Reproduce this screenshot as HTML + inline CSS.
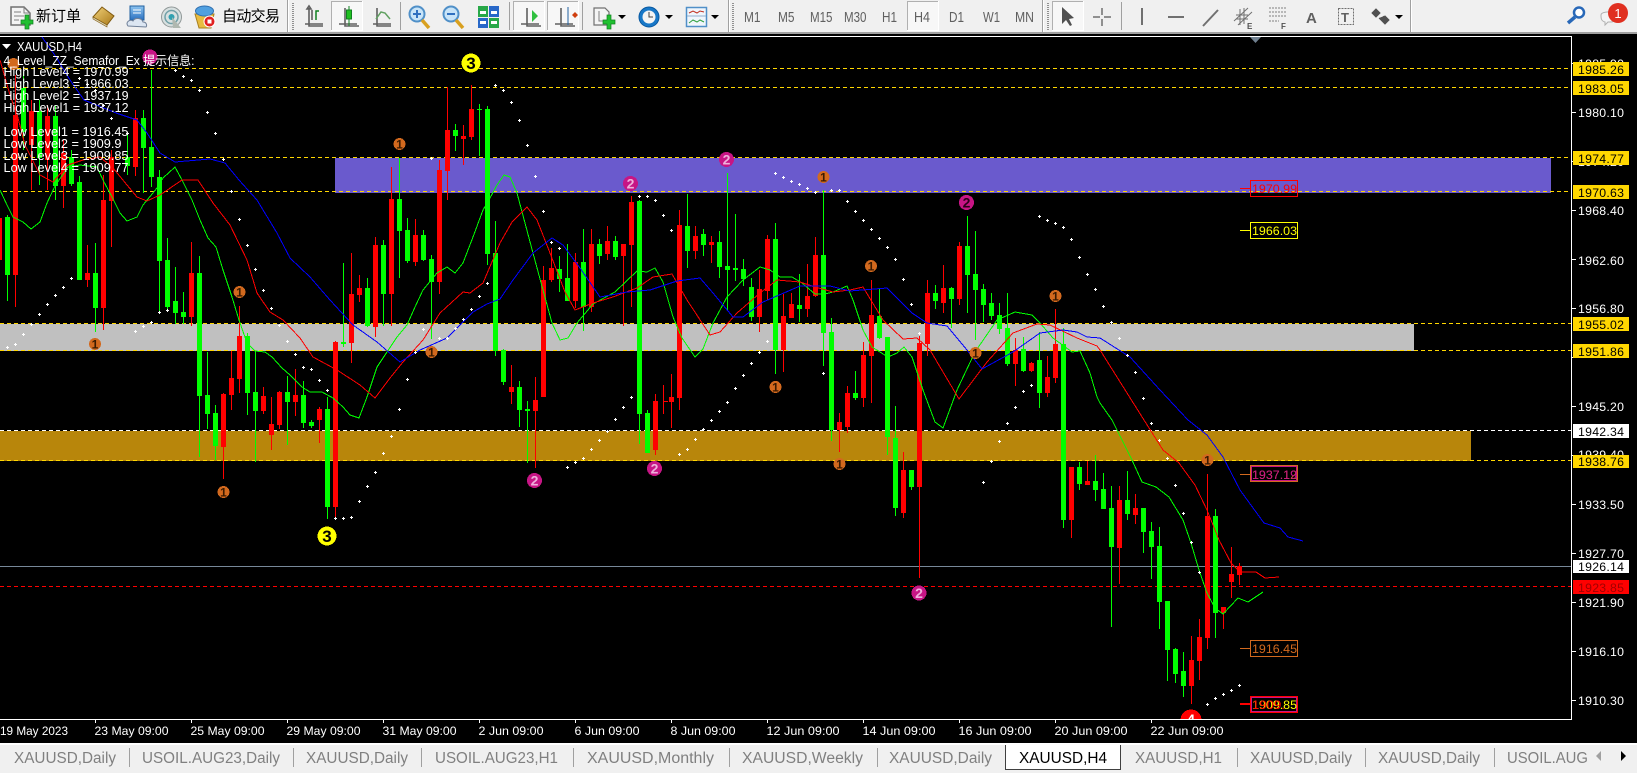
<!DOCTYPE html>
<html lang="zh"><head><meta charset="utf-8"><title>XAUUSD,H4</title>
<style>
html,body{margin:0;padding:0;background:#000;width:1637px;height:773px;overflow:hidden}
svg{display:block;font-family:"Liberation Sans","Noto Sans CJK SC",sans-serif}
.c{shape-rendering:crispEdges;fill:none}
.ax{fill:#fff;font-size:12.3px}
.tb{fill:#606060;font-size:14.5px}
.tab{fill:#808080;font-size:15.5px}
.lg{fill:#fff;font-size:12.6px}
.sem{font-size:12px;font-weight:bold;text-anchor:middle}
.ic{fill:none;stroke:#606060;stroke-width:1.6}
</style></head><body>
<svg width="1637" height="773" viewBox="0 0 1637 773" xmlns="http://www.w3.org/2000/svg">
<defs>
<marker id="d" markerWidth="3" markerHeight="3" refX="1" refY="1" markerUnits="userSpaceOnUse" overflow="visible"><path d="M1 0h1v3h-1zM0 1h3v1h-3z" fill="#fff"/></marker>
<linearGradient id="gg" x1="0" y1="0" x2="1" y2="1"><stop offset="0" stop-color="#f2d27a"/><stop offset="1" stop-color="#a87818"/></linearGradient>
<linearGradient id="bb" x1="0" y1="0" x2="0" y2="1"><stop offset="0" stop-color="#8cc4f0"/><stop offset="1" stop-color="#2a70c0"/></linearGradient>
</defs>
<rect width="1637" height="773" fill="#000"/>

<!-- zones -->
<rect x="335" y="158" width="1216" height="35" fill="#6a5acd"/>
<rect x="0" y="324" width="1414" height="27" fill="#c0c0c0"/>
<rect x="0" y="431" width="1471" height="30" fill="#b8860b"/>
<g class="c" stroke="#ffd700" stroke-dasharray="4 3">
<path d="M3 68.500H1572M3 87.500H1572M3 157.500H1572M3 191.500H1572M0 323.500H1572M0 350.500H1572M0 460.500H1572"/>
</g>
<path class="c" stroke="#fff" stroke-dasharray="4 3" d="M0 430.500H1572"/>
<path class="c" stroke="#f00" stroke-dasharray="4 3" d="M0 586.500H1572"/>
<path class="c" stroke="#778899" d="M0 566.500H1572"/>

<!-- green wicks -->
<path class="c" stroke="#0f0" d="M7.5 215V301M23.500 72V150M39.500 100V185M55.500 105V200M71.500 150V186M79.500 176V280M95.500 243V332M127.500 132V175M143.500 110V193M151.500 70V187M159.500 170V312M167.500 238V312M175.500 267V324M183.500 292V324M199.500 256V457M207.500 352V429M215.500 405V460M247.500 333V415M255.500 351V462M287.500 376V445M303.500 381V428M311.500 420V428M327.500 397V519M343.500 263V347M367.500 278V327M383.500 240V326M399.500 158V278M407.500 218V263M423.500 230V261M431.500 255V339M455.500 124V151M479.500 104V156M487.500 106V265M495.500 221V356M503.500 349V385M519.500 381V427M527.500 401V463M559.500 256V292M567.500 244V301M583.500 229V331M599.500 239V264M615.500 236V260M639.500 200V444M647.500 410V453M687.500 194V268M703.500 229V256M719.500 231V278M727.500 173V310M735.500 214V281M743.500 259V286M751.500 278V321M775.500 223V374M799.500 274V322M823.500 190V366M831.500 318V441M855.500 371V400M879.500 289V339M887.500 337V455M895.500 406V516M911.500 470V490M935.500 285V309M951.500 287V328M967.500 216V313M975.500 231V340M983.500 284V322M991.500 293V320M999.500 303V334M1007.500 293V366M1023.500 337V372M1039.500 332V408M1063.500 328V528M1079.500 462V490M1095.500 455V501M1103.500 473V509M1111.500 486V627M1127.500 471V520M1143.500 508V553M1151.500 522V579M1159.500 527V629M1167.500 601V681M1175.500 648V683M1183.500 652V697M1215.500 509V638"/>
<!-- red wicks -->
<path class="c" stroke="#f00" d="M-.5 215V262M15.500 75V307M31.500 100V190M47.500 105V190M63.500 140V208M87.500 245V287M103.500 175V330M111.500 150V247M135.500 110V176M191.500 242V326M223.500 393V479M231.500 351V410M239.500 306V393M263.500 387V414M271.500 397V450M279.500 391V429M295.500 369V416M319.500 407V443M335.500 341V519M351.500 253V363M359.500 275V302M375.500 237V337M391.500 167V326M415.500 219V266M439.500 160V294M447.500 87V200M463.500 125V165M471.500 85V140M511.500 365V404M535.500 377V468M543.500 266V397M551.500 248V282M575.500 253V308M591.500 229V312M607.500 226V260M623.500 244V326M631.500 196V307M655.500 394V455M663.500 385V414M671.500 374V428M679.500 210V410M695.500 226V259M711.500 236V263M759.500 270V332M767.500 235V300M783.500 294V372M791.500 293V318M807.500 264V317M815.500 237V297M839.500 413V452M847.500 386V433M863.500 342V407M871.500 280V403M903.500 452V518M919.500 336V578M927.500 280V356M943.500 265V313M959.500 242V305M1015.500 338V386M1031.500 362V372M1047.500 356V397M1055.500 309V383M1071.500 467V538M1087.500 461V485M1119.500 486V584M1135.500 494V524M1191.500 636V704M1199.500 619V680M1207.500 474V649M1223.500 607V629M1231.500 547V598M1239.500 563V585M663 401.500h5"/>
<!-- green bodies -->
<path class="c" stroke="#0f0" stroke-width="5" d="M7.5 217V275M23.500 88V132M39.500 111V158M55.500 116V186M71.500 157V184M79.500 182V280M95.500 273V308M127.500 157V166M143.500 118V148M151.500 147V177M159.500 177V261M167.500 260V307M175.500 301V313M183.500 312V317M199.500 273V396M207.500 395V414M215.500 413V446M247.500 336V393M255.500 392V411M287.500 392V402M303.500 395V423M311.500 422V426M327.500 409V507M343.500 342V344M367.500 288V326M383.500 245V294M399.500 199V231M407.500 230V261M423.500 235V260M431.500 259V282M455.500 130V136M479.500 109V110M487.500 109V254M495.500 253V351M503.500 350V382M519.500 387V410M527.500 409V411M559.500 269V279M567.500 278V301M583.500 262V307M599.500 244V256M615.500 241V257M639.500 201V414M647.500 413V453M687.500 226V251M703.500 234V245M719.500 242V267M727.500 266V270M735.500 268V270M743.500 269V279M751.500 287V317M775.500 239V350M799.500 305V309M823.500 255V333M831.500 332V430M855.500 393V398M879.500 316V338M887.500 337V437M895.500 438V508M911.500 470V487M935.500 293V301M951.500 288V299M967.500 246V275M975.500 274V290M983.500 289V305M991.500 303V316M999.500 315V329M1007.500 328V364M1023.500 349V371M1039.500 360V393M1063.500 344V520M1079.500 467V484M1095.500 481V490M1103.500 489V509M1111.500 508V547M1127.500 500V514M1143.500 508V532M1151.500 531V547M1159.500 546V602M1167.500 601V650M1175.500 649V674M1183.500 671V686M1215.500 516V613"/>
<!-- red bodies -->
<path class="c" stroke="#f00" stroke-width="5" d="M-.5 218V260M15.500 115V275M31.500 111V145M47.500 116V160M63.500 153V186M87.500 273V280M103.500 200V308M111.500 157V201M135.500 118V167M191.500 273V317M223.500 394V447M231.500 378V395M239.500 336V379M263.500 396V411M271.500 424V435M279.500 392V425M295.500 395V402M319.500 409V420M335.500 342V507M351.500 294V343M359.500 288V295M375.500 245V327M391.500 199V294M415.500 235V262M439.500 170V282M447.500 130V171M463.500 136V139M471.500 109V137M511.500 387V392M535.500 400V411M543.500 280V397M551.500 268V280M575.500 262V301M591.500 244V307M607.500 241V254M623.500 244V256M631.500 202V245M655.500 401V450M671.500 397V402M679.500 225V398M695.500 236V251M711.500 242V245M759.500 289V317M767.500 239V291M783.500 316V350M791.500 304V318M807.500 296V309M815.500 255V296M839.500 422V430M847.500 393V427M863.500 355V398M871.500 315V356M903.500 470V513M919.500 343V487M927.500 293V344M943.500 288V303M959.500 246V299M1015.500 350V364M1031.500 363V371M1047.500 377V393M1055.500 344V378M1071.500 467V520M1087.500 481V485M1119.500 500V548M1135.500 508V515M1191.500 660V686M1199.500 637V661M1207.500 516V638M1223.500 607V613M1231.500 574V582M1239.500 566V575"/>

<!-- moving averages -->
<polyline class="c" stroke="#0f0" points="0,190 7,205 13,217 23,222 31,229 40,222 47,203 55,186 68,167 80,165 97,167 103,180 112,197 120,213 127,221 137,217 143,205 157,188 163,178 175,167 182,180 192,200 200,220 208,238 216,247 223,270 232,297 239,320 247,343 255,351 265,352 272,357 282,368 290,375 302,387 310,392 322,392 333,398 343,407 350,415 359,418 367,397 377,367 387,352 397,337 407,325 415,307 423,290 437,273 447,267 455,273 463,263 473,237 483,210 490,198 497,185 504,175 510,177 517,193 525,223 533,253 543,290 552,323 560,340 568,338 577,323 593,304 615,292 637,271 647,272 655,268 663,282 673,317 682,338 695,357 703,349 713,323 727,297 743,280 760,267 770,270 780,277 792,277 802,283 815,294 825,294 833,292 847,286 853,300 863,330 872,347 888,357 897,353 904,347 912,357 923,390 935,422 943,428 957,390 975,352 997,320 1015,312 1032,315 1040,323 1053,338 1072,352 1080,351 1090,373 1097,397 1100,403 1112,420 1132,460 1142,482 1156,487 1169,497 1183,520 1191,543 1199,570 1207,593 1215,608 1223,614 1238,598 1248,602 1263,592"/>
<polyline class="c" stroke="#f00" points="0,60 10,95 18,118 25,145 40,175 53,182 68,165 83,160 100,157 113,168 127,185 137,197 147,201 160,195 182,180 198,180 213,203 230,225 247,260 257,293 270,312 283,320 300,338 313,357 337,370 360,385 375,398 390,378 403,362 423,340 440,313 463,292 470,293 483,283 500,243 512,222 527,207 537,220 550,253 565,292 575,310 593,303 613,297 637,288 653,277 672,274 687,300 710,335 720,332 737,313 760,293 777,280 800,282 815,287 833,292 850,290 863,287 883,320 903,339 917,338 930,350 959,399 987,362 1013,333 1037,324 1050,325 1077,338 1097,346 1100,350 1122,385 1144,420 1163,450 1179,463 1195,485 1207,510 1219,540 1231,563 1240,572 1256,572 1265,578 1279,577"/>
<polyline class="c" stroke="#00f" points="42,37 56,57 70,80 84,100 116,113 137,120 147,133 160,153 175,162 210,159 225,163 239,180 257,200 277,233 290,258 310,277 330,300 353,325 377,342 400,362 420,350 447,338 460,325 473,312 487,304 500,299 513,280 533,253 552,238 563,245 580,268 600,297 627,292 650,290 677,281 700,278 713,293 733,317 743,317 763,302 800,286 830,286 850,291 887,288 912,313 927,323 947,326 967,350 982,369 1013,352 1040,333 1063,330 1077,332 1087,337 1100,338 1130,357 1160,390 1188,420 1207,435 1223,457 1240,490 1264,523 1280,528 1288,537 1303,541"/>

<!-- SAR dots -->
<g fill="none" stroke="none" marker-start="url(#d)" marker-mid="url(#d)" marker-end="url(#d)">
<polyline points="7,347 15,344 23,334 31,324 39,314 47,304 55,295 63,287 71,278 135,331 143,326 151,322 159,312 167,310 175,70 183,76 191,80 199,90 207,112 215,133 223,159 231,191 239,219 247,245 255,269 263,290 271,308 279,325 287,341 295,354 303,367 311,369 319,380 327,390 79,78 87,84 95,90 103,105 111,118 127,133 335,518 343,518 351,517 359,501 367,486 375,472 383,453 391,436 399,409 407,379 415,352 423,329 431,158 439,338 447,338 455,328 463,319 471,309 479,296 487,283 495,85 503,90 511,102 519,120 527,145 535,176 543,211 551,242 559,248 567,467 575,462 583,458 591,449 599,440 607,431 615,419 623,407 631,397 639,196 647,196 655,200 663,215 671,230 679,454 687,449 695,439 703,429 711,420 719,411 727,402 735,388 743,375 751,363 759,352 767,341 775,173 783,177 791,181 799,184 807,188 815,192 823,373 831,190 839,190 847,201 855,211 863,220 871,229 879,238 887,247 895,259 903,279 911,304 919,333 983,482 991,461 999,441 1007,423 1015,407 1023,391 1031,385 1039,216 1047,220 1055,223 1063,227 1071,239 1079,257 1087,274 1095,289 1103,306 1111,322 1119,338 1127,355 1135,372 1143,398 1151,423 1159,440 1167,458 1175,485 1183,513 1191,542 1199,572 1207,704 1215,698 1223,694 1231,690 1239,685"/>
</g>

<!-- semafor markers -->
<g fill="#d2691e" shape-rendering="crispEdges">
<circle cx="13.500" cy="64" r="6"/><circle cx="239.500" cy="292" r="6"/><circle cx="95" cy="344" r="6"/><circle cx="431.500" cy="352" r="6"/><circle cx="223.500" cy="492" r="6"/><circle cx="399.500" cy="144" r="6"/><circle cx="823.500" cy="177" r="6"/><circle cx="871" cy="266" r="6"/><circle cx="775.500" cy="387" r="6"/><circle cx="839.500" cy="464" r="6"/><circle cx="975.500" cy="353" r="6"/><circle cx="1055.500" cy="296" r="6"/><circle cx="1207.500" cy="460" r="6"/>
</g>
<g class="sem" fill="#3a1a00">
<text x="239.500" y="296.500">1</text><text x="95" y="348.500">1</text><text x="431.500" y="356.500">1</text><text x="223.500" y="496.500">1</text><text x="399.500" y="148.500">1</text><text x="823.500" y="181.500">1</text><text x="871" y="270.500">1</text><text x="775.500" y="391.500">1</text><text x="839.500" y="468.500">1</text><text x="975.500" y="357.500">1</text><text x="1055.500" y="300.500">1</text><text x="1207.500" y="464.500">1</text>
</g>
<g fill="#c71585" shape-rendering="crispEdges">
<circle cx="150" cy="57" r="7.5"/><circle cx="726.500" cy="159.500" r="7.5"/><circle cx="630.500" cy="183.500" r="7.5"/><circle cx="966.500" cy="202.500" r="7.5"/><circle cx="654.500" cy="468.500" r="7.5"/><circle cx="534.500" cy="480.500" r="7.5"/><circle cx="919" cy="593" r="7.5"/>
</g>
<g class="sem" fill="#eeb0dc" style="font-size:14px">
<text x="726.500" y="164.500">2</text><text x="630.500" y="188.500">2</text><text x="654.500" y="473.500">2</text><text x="534.500" y="485.500">2</text><text x="919" y="598">2</text>
<text x="966.500" y="207.500" fill="#2a0018">2</text>
</g>
<g fill="#ff0" shape-rendering="crispEdges"><circle cx="471" cy="63" r="9.5"/><circle cx="327" cy="536" r="9.5"/></g>
<g class="sem" fill="#000" style="font-size:17px"><text x="471" y="69">3</text><text x="327" y="542">3</text></g>
<circle cx="1191" cy="720" r="10.500" fill="#f00" shape-rendering="crispEdges"/>
<text x="1191" y="724" class="sem" fill="#fff" style="font-size:14px">4</text>

<!-- level boxes -->
<g class="c">
<path stroke="#f00" d="M1240 188.500h10"/><rect x="1250.500" y="180.500" width="47" height="16" stroke="#f00"/>
<path stroke="#ff0" d="M1240 230.500h10"/><rect x="1250.500" y="222.500" width="47" height="16" stroke="#ff0"/>
<path stroke="#d2691e" d="M1240 474.500h10"/><rect x="1250.500" y="465.500" width="47" height="16" stroke="#d2691e"/><rect x="1251.500" y="466.500" width="45" height="14" stroke="#c71585"/>
<path stroke="#d2691e" d="M1240 648.500h10"/><rect x="1250.500" y="640.500" width="47" height="16" stroke="#d2691e"/>
<path stroke="#f00" stroke-width="2" d="M1240 704h10"/><rect x="1250.500" y="696.500" width="47" height="16" stroke="#f00"/><rect x="1251.500" y="697.500" width="45" height="14" stroke="#c71585"/>
</g>
<g style="font-size:12.3px">
<text x="1252" y="193" fill="#f00" textLength="45" lengthAdjust="spacingAndGlyphs">1970.99</text>
<text x="1252" y="235" fill="#ff0" textLength="45" lengthAdjust="spacingAndGlyphs">1966.03</text>
<text x="1252" y="479" fill="#d2691e" textLength="45" lengthAdjust="spacingAndGlyphs">1937.12</text>
<text x="1252" y="479" fill="#c71585" textLength="45" lengthAdjust="spacingAndGlyphs">1937.19</text>
<text x="1252" y="653" fill="#d2691e" textLength="45" lengthAdjust="spacingAndGlyphs">1916.45</text>
<text x="1252" y="709" fill="#ff0" textLength="45" lengthAdjust="spacingAndGlyphs">1909.85</text>
<text x="1252" y="709" fill="#f00" textLength="33" lengthAdjust="spacingAndGlyphs">1909.</text>
</g>

<!-- legend -->
<path d="M2 44h9l-4.500 5z" fill="#fff"/>
<g class="lg">
<text x="17" y="51" textLength="65" lengthAdjust="spacingAndGlyphs">XAUUSD,H4</text>
<text x="3.500" y="65" textLength="191" lengthAdjust="spacingAndGlyphs">4_Level_ZZ_Semafor_Ex 提示信息:</text>
<text x="3.500" y="76" textLength="125" lengthAdjust="spacingAndGlyphs">High Level4 = 1970.99</text>
<text x="3.500" y="88" textLength="125" lengthAdjust="spacingAndGlyphs">High Level3 = 1966.03</text>
<text x="3.500" y="100" textLength="125" lengthAdjust="spacingAndGlyphs">High Level2 = 1937.19</text>
<text x="3.500" y="112" textLength="125" lengthAdjust="spacingAndGlyphs">High Level1 = 1937.12</text>
<text x="3.500" y="136" textLength="125" lengthAdjust="spacingAndGlyphs">Low Level1 = 1916.45</text>
<text x="3.500" y="148" textLength="118" lengthAdjust="spacingAndGlyphs">Low Level2 = 1909.9</text>
<text x="3.500" y="160" textLength="125" lengthAdjust="spacingAndGlyphs">Low Level3 = 1909.85</text>
<text x="3.500" y="172" textLength="125" lengthAdjust="spacingAndGlyphs">Low Level4 = 1909.77</text>
</g>

<!-- axis backgrounds -->
<rect x="1572" y="34" width="65" height="710" fill="#000"/>
<rect x="0" y="720" width="1637" height="24" fill="#000"/>
<path class="c" stroke="#fff" d="M0 36.500H1571.500V719.500H0"/>
<path d="M1250 37h11l-5.500 6z" fill="#708090"/>
<path class="c" stroke="#fff" d="M1572 63.500h4M1572 112.500h4M1572 161.500h4M1572 210.500h4M1572 259.500h4M1572 308.500h4M1572 357.500h4M1572 406.500h4M1572 455.500h4M1572 504.500h4M1572 553.500h4M1572 602.500h4M1572 651.500h4M1572 700.500h4M95.500 720v3M191.500 720v3M287.500 720v3M383.500 720v3M479.500 720v3M575.500 720v3M671.500 720v3M767.500 720v3M863.500 720v3M959.500 720v3M1055.500 720v3M1151.500 720v3"/>
<g class="ax">
<text x="1578" y="68" textLength="46">1985.90</text><text x="1578" y="117" textLength="46">1980.10</text><text x="1578" y="166" textLength="46">1974.20</text><text x="1578" y="215" textLength="46">1968.40</text><text x="1578" y="265" textLength="46">1962.60</text><text x="1578" y="313" textLength="46">1956.80</text><text x="1578" y="411" textLength="46">1945.20</text><text x="1578" y="459" textLength="46">1939.40</text><text x="1578" y="509" textLength="46">1933.50</text><text x="1578" y="558" textLength="46">1927.70</text><text x="1578" y="607" textLength="46">1921.90</text><text x="1578" y="656" textLength="46">1916.10</text><text x="1578" y="705" textLength="46">1910.30</text>
<text x="0" y="735" textLength="68" lengthAdjust="spacingAndGlyphs">19 May 2023</text>
<text x="94.500" y="735" textLength="74" lengthAdjust="spacingAndGlyphs">23 May 09:00</text>
<text x="190.500" y="735" textLength="74" lengthAdjust="spacingAndGlyphs">25 May 09:00</text>
<text x="286.500" y="735" textLength="74" lengthAdjust="spacingAndGlyphs">29 May 09:00</text>
<text x="382.500" y="735" textLength="74" lengthAdjust="spacingAndGlyphs">31 May 09:00</text>
<text x="478.500" y="735" textLength="65" lengthAdjust="spacingAndGlyphs">2 Jun 09:00</text>
<text x="574.500" y="735" textLength="65" lengthAdjust="spacingAndGlyphs">6 Jun 09:00</text>
<text x="670.500" y="735" textLength="65" lengthAdjust="spacingAndGlyphs">8 Jun 09:00</text>
<text x="766.500" y="735" textLength="73" lengthAdjust="spacingAndGlyphs">12 Jun 09:00</text>
<text x="862.500" y="735" textLength="73" lengthAdjust="spacingAndGlyphs">14 Jun 09:00</text>
<text x="958.500" y="735" textLength="73" lengthAdjust="spacingAndGlyphs">16 Jun 09:00</text>
<text x="1054.500" y="735" textLength="73" lengthAdjust="spacingAndGlyphs">20 Jun 09:00</text>
<text x="1150.500" y="735" textLength="73" lengthAdjust="spacingAndGlyphs">22 Jun 09:00</text>
</g>
<!-- axis price labels -->
<g fill="#ffd700"><rect x="1573" y="62" width="56" height="14"/><rect x="1573" y="81" width="56" height="14"/><rect x="1573" y="151" width="56" height="14"/><rect x="1573" y="185" width="56" height="14"/><rect x="1573" y="317" width="56" height="14"/><rect x="1573" y="344" width="56" height="14"/><rect x="1573" y="455" width="56" height="13"/></g>
<g fill="#fff"><rect x="1573" y="424" width="56" height="14"/><rect x="1573" y="560" width="56" height="13"/></g>
<rect x="1573" y="580" width="56" height="14" fill="#f00"/>
<g style="font-size:12.3px" fill="#000">
<text x="1578" y="74" textLength="46">1985.26</text><text x="1578" y="93" textLength="46">1983.05</text><text x="1578" y="163" textLength="46">1974.77</text><text x="1578" y="197" textLength="46">1970.63</text><text x="1578" y="329" textLength="46">1955.02</text><text x="1578" y="356" textLength="46">1951.86</text><text x="1578" y="436" textLength="46">1942.34</text><text x="1578" y="466" textLength="46">1938.76</text><text x="1578" y="571" textLength="46">1926.14</text><text x="1578" y="592" textLength="46" fill="#a00000">1923.85</text>
</g>

<!-- tab strip -->
<rect x="0" y="743" width="1637" height="2" fill="#fff"/>
<rect x="0" y="745" width="1637" height="28" fill="#f0f0f0"/>
<path class="c" stroke="#a0a0a0" d="M129.500 748v19M293.500 748v19M421.500 748v19M573.500 748v19M729.500 748v19M877.500 748v19M1237.500 748v19M1365.500 748v19M1494.500 748v19"/>
<rect x="1006" y="745" width="115" height="24" fill="#fff"/>
<path class="c" stroke="#404040" d="M1005.500 745v24.500h115v-24.500"/>
<g class="tab">
<text x="14" y="763" textLength="102" lengthAdjust="spacingAndGlyphs">XAUUSD,Daily</text>
<text x="142" y="763" textLength="138" lengthAdjust="spacingAndGlyphs">USOIL.AUG23,Daily</text>
<text x="306" y="763" textLength="102" lengthAdjust="spacingAndGlyphs">XAUUSD,Daily</text>
<text x="435" y="763" textLength="123" lengthAdjust="spacingAndGlyphs">USOIL.AUG23,H1</text>
<text x="587" y="763" textLength="127" lengthAdjust="spacingAndGlyphs">XAUUSD,Monthly</text>
<text x="742" y="763" textLength="121" lengthAdjust="spacingAndGlyphs">XAUUSD,Weekly</text>
<text x="889" y="763" textLength="103" lengthAdjust="spacingAndGlyphs">XAUUSD,Daily</text>
<text x="1019" y="763" textLength="88" lengthAdjust="spacingAndGlyphs" fill="#000">XAUUSD,H4</text>
<text x="1135" y="763" textLength="87" lengthAdjust="spacingAndGlyphs">XAUUSD,H1</text>
<text x="1250" y="763" textLength="102" lengthAdjust="spacingAndGlyphs">XAUUSD,Daily</text>
<text x="1378" y="763" textLength="102" lengthAdjust="spacingAndGlyphs">XAUUSD,Daily</text>
<text x="1507" y="763" textLength="81" lengthAdjust="spacingAndGlyphs">USOIL.AUG</text>
</g>
<path d="M1601 751v10l-5-5z" fill="#a0a0a0"/><path d="M1621 751v10l5-5z" fill="#000"/>

<!-- toolbar -->
<rect x="0" y="0" width="1637" height="32" fill="#f0f0f0"/>
<rect x="0" y="32" width="1637" height="2" fill="#a0a0a0"/>
<!-- separators -->
<path class="c" stroke="#a0a0a0" d="M287.500 0v32M728.500 0v32M1042.500 0v32M1410.500 0v32M400.500 2v28M509.500 2v28M582.500 2v28M1121.500 2v28"/>
<path class="c" stroke="#fff" d="M288.500 0v32M729.500 0v32M1043.500 0v32M1411.500 0v32"/>
<g class="c" stroke="#909090" stroke-width="2" stroke-dasharray="1 1"><path d="M293 3v27M733 3v27M1048 3v27"/></g>
<!-- selected boxes -->
<g shape-rendering="crispEdges">
<rect x="331" y="1" width="31" height="29" fill="#f7f7f7"/><path d="M331.500 30V1.500H362" fill="none" stroke="#b0b0b0"/><path d="M362.500 1V30.500H331" fill="none" stroke="#fff"/>
<rect x="513" y="1" width="31" height="29" fill="#f7f7f7"/><path d="M513.500 30V1.500H544" fill="none" stroke="#b0b0b0"/><path d="M544.500 1V30.500H513" fill="none" stroke="#fff"/>
<rect x="547" y="1" width="31" height="29" fill="#f7f7f7"/><path d="M547.500 30V1.500H578" fill="none" stroke="#b0b0b0"/><path d="M578.500 1V30.500H547" fill="none" stroke="#fff"/>
<rect x="907" y="1" width="31" height="29" fill="#f7f7f7"/><path d="M907.500 30V1.500H938" fill="none" stroke="#b0b0b0"/><path d="M938.500 1V30.500H907" fill="none" stroke="#fff"/>
<rect x="1052" y="1" width="31" height="29" fill="#f7f7f7"/><path d="M1052.500 30V1.500H1083" fill="none" stroke="#b0b0b0"/><path d="M1083.500 1V30.500H1052" fill="none" stroke="#fff"/>
</g>
<!-- new order -->
<path d="M11 7h13l6 6v12H11z" fill="#f4f4f4" stroke="#707070" stroke-width="1.5"/><path d="M24 7v6h6M14 12h7M14 16h10M14 20h5" fill="none" stroke="#808080"/>
<path d="M21 20h4v-5h4v5h4v4h-4v5h-4v-5h-4z" fill="#20c030" stroke="#108020" stroke-width=".7"/>
<text x="36" y="21" font-size="15" fill="#000" textLength="45">新订单</text>
<!-- book -->
<path d="M93 17l9-10 12 9-7 9z" fill="url(#gg)" stroke="#805a10"/><path d="M93 17l14 8v2l-14-8z" fill="#d8d0b0" stroke="#805a10" stroke-width=".6"/>
<!-- cloud doc -->
<path d="M130 6h14v14h-14z" fill="url(#bb)" stroke="#2060a0"/><path d="M133 10h8M133 13h8" stroke="#fff"/>
<path d="M128 26c-3-4 2-7 5-5 2-4 9-3 10 1 4 0 4 4 3 5z" fill="#dce6f2" stroke="#708098"/>
<!-- radio -->
<circle cx="171.500" cy="17" r="10" fill="#d8e0e0" stroke="#909898"/><circle cx="171.500" cy="17" r="6.500" fill="none" stroke="#70a0a8" stroke-width="1.5"/><circle cx="171.500" cy="17" r="3" fill="#30a0b0"/><path d="M172 17l9 11h-8z" fill="#b0b8b0"/>
<!-- auto trading -->
<path d="M195 14h19l-3 14h-12z" fill="#e8bc40" stroke="#a88020"/><ellipse cx="204.500" cy="11" rx="9" ry="5" fill="#50a0e0" stroke="#3070b0"/>
<circle cx="209.500" cy="21.500" r="5.500" fill="#e02020" stroke="#fff"/><rect x="207.500" y="19.500" width="4" height="4" fill="#fff"/>
<text x="222" y="21" font-size="15" fill="#000" textLength="58">自动交易</text>
<!-- bar chart / candle / line -->
<g class="ic">
<path d="M309 8v18h14M305 24h18M309 6l-2 3h4zM312 10v10"/>
<path d="M345 8v18h14M339 24h18"/>
<path d="M377 8v18h14M373 24h18"/>
<path d="M527 8v18h14M521 24h18"/><path d="M561 8v18h14M555 24h18"/>
</g>
<path d="M316 20v-9h3" fill="none" stroke="#108020" stroke-width="1.500"/>
<path d="M349 6v20" stroke="#108020"/><rect x="346.500" y="10" width="5" height="9" fill="#20c020" stroke="#108020"/>
<path d="M376 19l5-7 4 1 5 6" fill="none" stroke="#60a060" stroke-width="1.500"/>
<path d="M532 10l6 6-6 6z" fill="#30c040"/><path d="M568 7v18" stroke="#2060a0"/><path d="M578 15h-6l3-3zM572 15l3 3 3-3" fill="#d04010"/>
<!-- zoom -->
<circle cx="417" cy="14" r="7.500" fill="#c8e4f8" stroke="#5090c8" stroke-width="2"/><path d="M413 14h8M417 10v8" stroke="#3070c0" stroke-width="2"/><path d="M422 20l7 8" stroke="#d8a020" stroke-width="3.500"/>
<circle cx="451" cy="14" r="7.500" fill="#c8e4f8" stroke="#5090c8" stroke-width="2"/><path d="M447 14h8" stroke="#3070c0" stroke-width="2"/><path d="M456 20l7 8" stroke="#d8a020" stroke-width="3.500"/>
<!-- grid -->
<g shape-rendering="crispEdges"><rect x="478" y="6" width="10" height="11" fill="#28a848"/><rect x="489" y="6" width="10" height="11" fill="#2868c8"/><rect x="478" y="18" width="10" height="10" fill="#2868c8"/><rect x="489" y="18" width="10" height="10" fill="#28a848"/>
<path d="M480 11h6v3h-6zM491 11h6v3h-6zM480 21h6v3h-6zM491 21h6v3h-6z" fill="#fff"/></g>
<!-- new chart -->
<path d="M594 8h11l4 4v13h-15z" fill="#f4f4f4" stroke="#707070" stroke-width="1.200"/><path d="M599 11v10h6" fill="none" stroke="#808080"/>
<path d="M603 20h4v-5h4v5h4v4h-4v5h-4v-5h-4z" fill="#20c030" stroke="#108020" stroke-width=".7"/>
<path d="M618 15h8l-4 4z M665 15h8l-4 4z M711 15h8l-4 4z M1395 15h8l-4 4z" fill="#000"/>
<!-- clock -->
<circle cx="649" cy="17" r="10" fill="#1878c8" stroke="#0858a0"/><circle cx="649" cy="17" r="6.500" fill="#f4f4f4"/><path d="M649 12v5h4" fill="none" stroke="#404040"/>
<!-- template -->
<rect x="686.500" y="7.500" width="20" height="19" fill="#f0f6fc" stroke="#5090c8" stroke-width="1.500"/><path d="M687 16h19" stroke="#90b0d0"/><path d="M689 13l4-2 4 2 3-2 4 1" fill="none" stroke="#c03020"/><path d="M689 23l4-3 4 2 3-2 4 2" fill="none" stroke="#30a040"/>
<!-- periods -->
<g class="tb">
<text x="744" y="22" textLength="16.500" lengthAdjust="spacingAndGlyphs">M1</text>
<text x="778" y="22" textLength="16.500" lengthAdjust="spacingAndGlyphs">M5</text>
<text x="810" y="22" textLength="22.500" lengthAdjust="spacingAndGlyphs">M15</text>
<text x="844" y="22" textLength="22.500" lengthAdjust="spacingAndGlyphs">M30</text>
<text x="882" y="22" textLength="15" lengthAdjust="spacingAndGlyphs">H1</text>
<text x="914" y="22" textLength="16" lengthAdjust="spacingAndGlyphs">H4</text>
<text x="949" y="22" textLength="15" lengthAdjust="spacingAndGlyphs">D1</text>
<text x="983" y="22" textLength="17" lengthAdjust="spacingAndGlyphs">W1</text>
<text x="1015" y="22" textLength="19" lengthAdjust="spacingAndGlyphs">MN</text>
</g>
<!-- draw tools -->
<path d="M1062 7l0 17 4-4 4 6 2-1-3-6 5-1z" fill="#505050"/>
<path d="M1093 17h7M1104 17h7M1102 8v7M1102 19v7" stroke="#707070" stroke-width="1.500"/>
<path d="M1142 8v17" stroke="#707070" stroke-width="2"/>
<path d="M1168 17h16" stroke="#707070" stroke-width="2"/>
<path d="M1203 26l15-16" stroke="#707070" stroke-width="2"/>
<path d="M1234 21l14-13M1238 25l14-13M1240 9v16M1244 8v16M1236 15h12M1236 19h12" stroke="#707070" fill="none"/>
<text x="1247" y="29" font-size="8" font-weight="bold" fill="#505050">E</text>
<path d="M1269 8h17M1269 12h17M1269 16h17M1269 21h10" stroke="#808080" stroke-dasharray="2 1" fill="none"/>
<text x="1281" y="29" font-size="8" font-weight="bold" fill="#505050">F</text>
<text x="1306" y="23" font-size="15" font-weight="bold" fill="#606060">A</text>
<rect x="1338.500" y="8.500" width="15" height="16" fill="none" stroke="#707070" stroke-dasharray="2 1"/><text x="1341" y="22" font-size="13" font-weight="bold" fill="#606060">T</text>
<path d="M1376 9l4 4-4 4-4-4zM1385 16l4 4-4 4-4-4zM1379 18l2 2 3-4" fill="#505050" stroke="#505050"/>
<!-- search / chat -->
<circle cx="1579" cy="12.500" r="5" fill="#fff" stroke="#2868b8" stroke-width="2.500"/><path d="M1575 17l-7 6" stroke="#2868b8" stroke-width="3.500"/>
<path d="M1601 15c0-3 9-4 12-2 4 2 3 9-2 9h-3l-3 3v-3c-4-1-4-4-4-7z" fill="#f4f4f4" stroke="#b0b0b0"/>
<circle cx="1618" cy="13" r="10" fill="#e03020"/>
<text x="1618" y="18" font-size="13" fill="#fff" text-anchor="middle">1</text>
</svg>
</body></html>
